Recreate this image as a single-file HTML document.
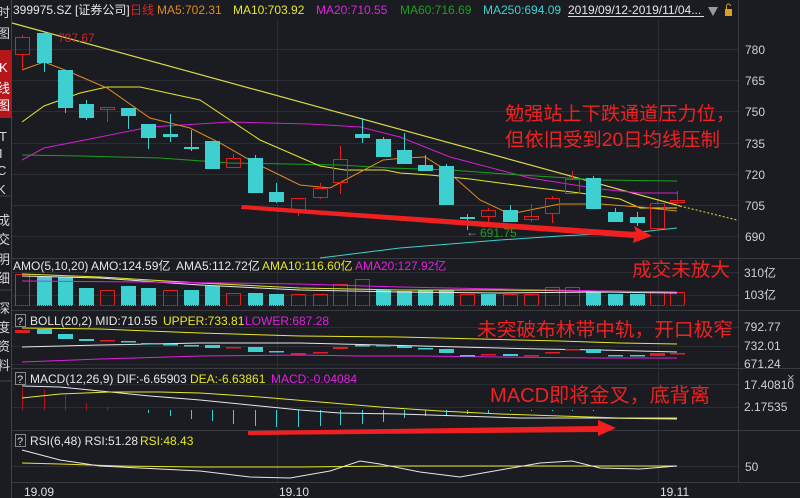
<!DOCTYPE html>
<html><head><meta charset="utf-8"><style>
html,body{margin:0;padding:0;background:#1b1c21;width:800px;height:498px;overflow:hidden}
svg{display:block}
text{font-family:"Liberation Sans","Noto Sans CJK SC",sans-serif}
</style></head><body>
<svg id="s" width="800" height="498" viewBox="0 0 800 498" xmlns="http://www.w3.org/2000/svg">
<rect width="800" height="498" fill="#1b1c21"/>
<rect x="0" y="50" width="11" height="68" fill="#b3171b"/>
<g fill="#d8d8d8" font-size="13">
<text x="-3" y="17">时</text><text x="-3" y="38">图</text>
<text x="-1" y="72" fill="#fff">K</text><text x="-3" y="93" fill="#fff">线</text><text x="-3" y="110" fill="#fff">图</text>
<text x="-1" y="141" font-size="13">T</text><text x="-1" y="158" font-size="13">I</text><text x="-3" y="175" font-size="13">C</text><text x="-3" y="194" font-size="13">K</text>
<text x="-3" y="225">成</text><text x="-3" y="244">交</text><text x="-3" y="264">明</text><text x="-3" y="283">细</text>
<text x="-3" y="313">深</text><text x="-3" y="332">度</text><text x="-3" y="351">资</text><text x="-3" y="370">料</text>
</g>
<g stroke="#444" stroke-width="1">
<line x1="0" y1="196" x2="11" y2="196"/><line x1="0" y1="290" x2="11" y2="290"/><line x1="0" y1="381" x2="11" y2="381"/>
<line x1="11.5" y1="0" x2="11.5" y2="498"/>
</g>
<g stroke="#3a3b40" stroke-width="1" fill="none">
<line x1="738.5" y1="0" x2="738.5" y2="482"/>
<line x1="12" y1="258.5" x2="800" y2="258.5"/>
<line x1="12" y1="310.5" x2="800" y2="310.5"/>
<line x1="12" y1="368.5" x2="800" y2="368.5"/>
<line x1="12" y1="430.5" x2="800" y2="430.5"/>
<line x1="12" y1="482.5" x2="800" y2="482.5"/>
</g>
<g stroke="#2c2d32" stroke-width="1">
<line x1="277.5" y1="20" x2="277.5" y2="482"/><line x1="658.5" y1="20" x2="658.5" y2="482"/>
</g>
<g id="dyn"></g>
<g font-size="12">
<text x="13" y="14" fill="#e6e6e6">399975.SZ [证券公司]</text>
<text x="130" y="14" fill="#e02020">日线</text>
<text x="157" y="14" fill="#e08a1e">MA5:702.31</text>
<text x="233" y="14" fill="#e6e62a">MA10:703.92</text>
<text x="316" y="14" fill="#e020e0">MA20:710.55</text>
<text x="400" y="14" fill="#1ea01e">MA60:716.69</text>
<text x="483" y="14" fill="#3ed0d0">MA250:694.09</text>
<text x="568" y="14" fill="#e6e6e6">2019/09/12-2019/11/04...</text>
</g>
<line x1="568" y1="16.5" x2="704" y2="16.5" stroke="#ddd"/>
<polygon points="708,7 718,7 713,16" fill="#999"/>
<rect x="725" y="9" width="7" height="7" fill="#d9a21e"/><path d="M726.5 9 V6 a2 2 0 0 1 4 0" stroke="#d9a21e" fill="none"/>
<g font-size="12" fill="#d0d0d0">
<text x="745" y="54">780</text><text x="745" y="85">765</text><text x="745" y="116">750</text><text x="745" y="148">735</text><text x="745" y="179">720</text><text x="745" y="210">705</text><text x="745" y="241">690</text>
<text x="744" y="277">310亿</text><text x="744" y="299">103亿</text>
<text x="744" y="331">792.77</text><text x="744" y="350">732.01</text><text x="744" y="368">671.24</text>
<text x="744" y="389">17.40810</text><text x="744" y="411">2.17535</text>
<text x="745" y="471">50</text>
<text x="24" y="496" fill="#e0e0e0">19.09</text><text x="279" y="496" fill="#e0e0e0">19.10</text><text x="660" y="496" fill="#e0e0e0">19.11</text>
</g>
<text x="787" y="382" font-size="13" fill="#aaa">×</text>
<g font-size="12">
<text x="13" y="270" fill="#e6e6e6">AMO(5,10,20) AMO:124.59亿</text>
<text x="176" y="270" fill="#e6e6e6">AMA5:112.72亿</text>
<text x="262" y="270" fill="#e6e62a">AMA10:116.60亿</text>
<text x="355" y="270" fill="#e020e0">AMA20:127.92亿</text>
<rect x="15.5" y="314.5" width="10" height="12" fill="none" stroke="#888"/><text x="17" y="325" fill="#ddd" font-size="11">?</text>
<text x="30" y="325" fill="#e6e6e6">BOLL(20,2) MID:710.55</text>
<text x="163" y="325" fill="#e6e62a">UPPER:733.81</text>
<text x="245" y="325" fill="#e020e0">LOWER:687.28</text>
<rect x="15.5" y="372.5" width="10" height="12" fill="none" stroke="#888"/><text x="17" y="383" fill="#ddd" font-size="11">?</text>
<text x="30" y="383" fill="#e6e6e6">MACD(12,26,9) DIF:-6.65903</text>
<text x="190" y="383" fill="#e6e62a">DEA:-6.63861</text>
<text x="271" y="383" fill="#e020e0">MACD:-0.04084</text>
<rect x="15.5" y="434.5" width="10" height="12" fill="none" stroke="#888"/><text x="17" y="445" fill="#ddd" font-size="11">?</text>
<text x="30" y="445" fill="#e6e6e6">RSI(6,48) RSI:51.28</text>
<text x="140" y="445" fill="#e6e62a">RSI:48.43</text>
</g>
<text x="58" y="42" font-size="12" fill="#d02020">787.67</text>
<text x="466" y="236" font-size="12" fill="#999">←</text><text x="480" y="237" font-size="12" fill="#1ea01e">691.75</text>
<g fill="#ee2222">
<text x="505" y="120" font-size="19" textLength="230" lengthAdjust="spacingAndGlyphs">勉强站上下跌通道压力位，</text>
<text x="505" y="146" font-size="19" textLength="215" lengthAdjust="spacingAndGlyphs">但依旧受到20日均线压制</text>
<text x="632" y="276" font-size="19" textLength="98" lengthAdjust="spacingAndGlyphs">成交未放大</text>
<text x="477" y="336" font-size="19" textLength="256" lengthAdjust="spacingAndGlyphs">未突破布林带中轨，开口极窄</text>
<text x="490" y="402" font-size="20" textLength="220" lengthAdjust="spacingAndGlyphs">MACD即将金叉，底背离</text>
</g>
</svg>
<script>
var NS="http://www.w3.org/2000/svg",g=document.getElementById('dyn');
function el(t,a){var e=document.createElementNS(NS,t);for(var k in a)e.setAttribute(k,a[k]);g.appendChild(e);return e}
function hl(y){el('line',{x1:12,y1:y,x2:738,y2:y,stroke:'#2c2d32'})}
[49,80,111,143,174,205,236,272,295,327,346,364,384,407,466].forEach(function(y){hl(y+.5)});
function pl(pts,c,w){el('polyline',{points:pts.map(function(p){return p.join(',')}).join(' '),fill:'none',stroke:c,'stroke-width':w||1})}
var R='#e02020',C='#3ed0d0';
var K=[[22,37,54,35,70,1],[44,33,62,31,72,0],[65,70,107,70,113,0],[86,104,117,100,120,0],[107,107,109,107,122,1],[128,108,115,108,129,0],[148,124,137,124,149,0],[170,134,136,114,142,0],[191,147,148,130,151,0],[212,141,168,142,169,0],[233,158,167,154,167,1],[255,158,192,155,192,0],[276,192,201,183,203,0],[298,198,210,198,216,1],[320,188,197,183,199,1],[340,159,182,146,194,1],[362,134,137,118,143,0],[383,139,156,137,156,0],[404,150,163,133,163,0],[425,165,170,155,170,0],[446,166,204,164,204,0],[467,217,218,214,230,0],[488,210,216,208,222,1],[510,210,221,205,221,0],[531,216,219,204,222,1],[552,198,213,196,223,1],[572,179,193,171,194,1],[593,178,208,176,208,0],[615,212,221,208,221,0],[637,217,222,212,226,0],[657,203,228,200,228,1],[677,200,202,191,206,1]];
el('line',{x1:12,y1:23,x2:680,y2:206,stroke:'#d8d84a','stroke-width':1.2});
el('line',{x1:680,y1:206,x2:737,y2:220,stroke:'#e6e62a','stroke-dasharray':'2,2'});
pl([[22,160],[44,148],[100,137],[150,127],[230,122],[310,124],[360,127],[400,137],[450,157],[530,178],[600,189],[640,193],[677,193]],'#d020d0');
pl([[22,155],[80,156],[160,158],[230,163],[340,165],[390,168],[450,170],[520,175],[600,180],[677,181]],'#1ea01e');
pl([[22,122],[44,106],[80,93],[107,87],[140,87],[200,100],[260,140],[320,166],[345,170],[385,170],[400,173],[430,175],[470,179],[530,187],[580,193],[620,199],[640,208],[677,208]],'#e6e62a');
pl([[22,70],[44,62],[65,70],[107,88],[150,118],[190,128],[220,143],[255,163],[300,185],[330,188],[345,180],[383,160],[404,158],[425,157],[446,170],[480,200],[510,214],[530,210],[560,204],[600,204],[640,207],[677,211]],'#e08a1e');
pl([[320,258],[400,248],[500,240],[560,236],[640,232],[677,228]],'#3ed0d0');
K.forEach(function(k){var c=k[5]?R:C,x=k[0];
 var h=Math.max(1,k[2]-k[1]);
 if(k[5]){el('line',{x1:x+.5,y1:k[3],x2:x+.5,y2:k[1],stroke:c});el('line',{x1:x+.5,y1:k[2],x2:x+.5,y2:k[4],stroke:c});el('rect',{x:x-7+.5,y:k[1]+.5,width:14,height:h,fill:'none',stroke:c});}
 else {el('line',{x1:x+.5,y1:k[3],x2:x+.5,y2:k[4],stroke:c});el('rect',{x:x-7,y:k[1],width:15,height:h+1,fill:c});}
});
el('polygon',{points:'242,205 636,232 634,226 652,236 633,243 634,238 241,209',fill:'#f02020'});
var A=[[274,1],[277,0],[277,0],[288,0],[290,1],[286,0],[288,0],[290,1],[290,0],[286,0],[293,1],[293,0],[294,0],[294,1],[294,1],[284,1],[279,1],[290,0],[291,0],[290,0],[290,0],[294,1],[294,0],[294,1],[294,1],[287,1],[287,1],[291,0],[294,0],[294,0],[292,1],[292,1]];
A.forEach(function(a,i){var x=K[i][0];if(a[1])el('rect',{x:x-7+.5,y:a[0]+.5,width:14,height:305-a[0],fill:'none',stroke:R});else el('rect',{x:x-7,y:a[0],width:15,height:306-a[0],fill:C})});
el('line',{x1:12,y1:305.5,x2:738,y2:305.5,stroke:'#7a1515','stroke-dasharray':'1,1'});
pl([[22,274],[100,277],[200,283],[300,288],[400,290],[500,290],[600,291],[677,292]],'#e6e62a');
pl([[22,276],[100,278],[200,285],[300,290],[400,292],[500,293],[600,292],[677,293]],'#e6e6e6');
pl([[22,281],[150,282],[300,284],[400,287],[500,289],[600,291],[677,292]],'#e020e0');
pl([[22,328],[100,329],[200,333],[300,336],[400,337],[480,339],[560,341],[620,343],[677,344]],'#e6e62a');
pl([[22,347],[100,345],[200,343],[300,343],[380,345],[460,347],[540,349],[600,350],[677,352]],'#e6e6e6');
pl([[22,362],[100,359],[200,356],[300,355],[360,356],[420,356],[500,357],[600,358],[677,358]],'#e020e0');
var B=[[22,330,333,1],[44,329,334,0],[65,334,339,0],[86,339,341,0],[107,340,341,1],[128,341,341.5,0],[148,343,344,0],[170,344,345,0],[191,345,346,0],[212,345,348,0],[233,347,348,1],[255,347,352,0],[276,351,352,0],[298,353,354,1],[320,352,353,1],[340,347,349,1],[362,345,345,0],[383,345,346,0],[404,346,348,0],[425,348,349,0],[446,349,353,0],[467,355,356,0],[488,354,355,1],[510,354,356,0],[531,355,355,1],[552,352,353,1],[572,349,350,1],[593,349,353,0],[615,355,356,0],[637,355,356,0],[657,353,356,1],[677,353,354,1]];
B.forEach(function(b){var c=b[3]?R:C;el('rect',{x:b[0]-7,y:b[1],width:15,height:Math.max(1.5,b[2]-b[1]),fill:c})});
var M=[-22,-20,-15,-7,-3,0,3,6,9,11,14,16,17,17,16,15,14,12,8,6,5,4,3,1,1,1,1,1,0,0,0,0];
M.forEach(function(m,i){var x=K[i][0]+.5;if(m!=0)el('line',{x1:x,y1:410,x2:x,y2:410+m,stroke:m<0?'#b01515':C})});
pl([[22,386],[60,387],[100,391],[150,396],[200,400],[260,406],[300,410],[340,413],[400,414],[460,416],[520,418],[600,418],[677,419]],'#e6e6e6');
pl([[22,398],[60,394],[110,392],[160,392],[200,393],[260,397],[320,402],[380,407],[440,411],[500,414],[560,416],[620,418],[677,418]],'#e6e62a');
el('polygon',{points:'248,431 598,426 598,420 616,428 598,436 598,432 248,435',fill:'#f02020'});
pl([[22,463],[60,464],[120,466],[200,467],[300,467],[400,466],[500,466],[600,466],[677,466]],'#e6e62a');
pl([[22,450],[60,460],[100,466],[140,468],[200,471],[250,477],[290,478],[330,471],[360,461],[380,464],[420,472],[460,477],[500,470],[540,463],[572,461],[600,468],[640,469],[677,466]],'#e6e6e6');
</script>
</body></html>
